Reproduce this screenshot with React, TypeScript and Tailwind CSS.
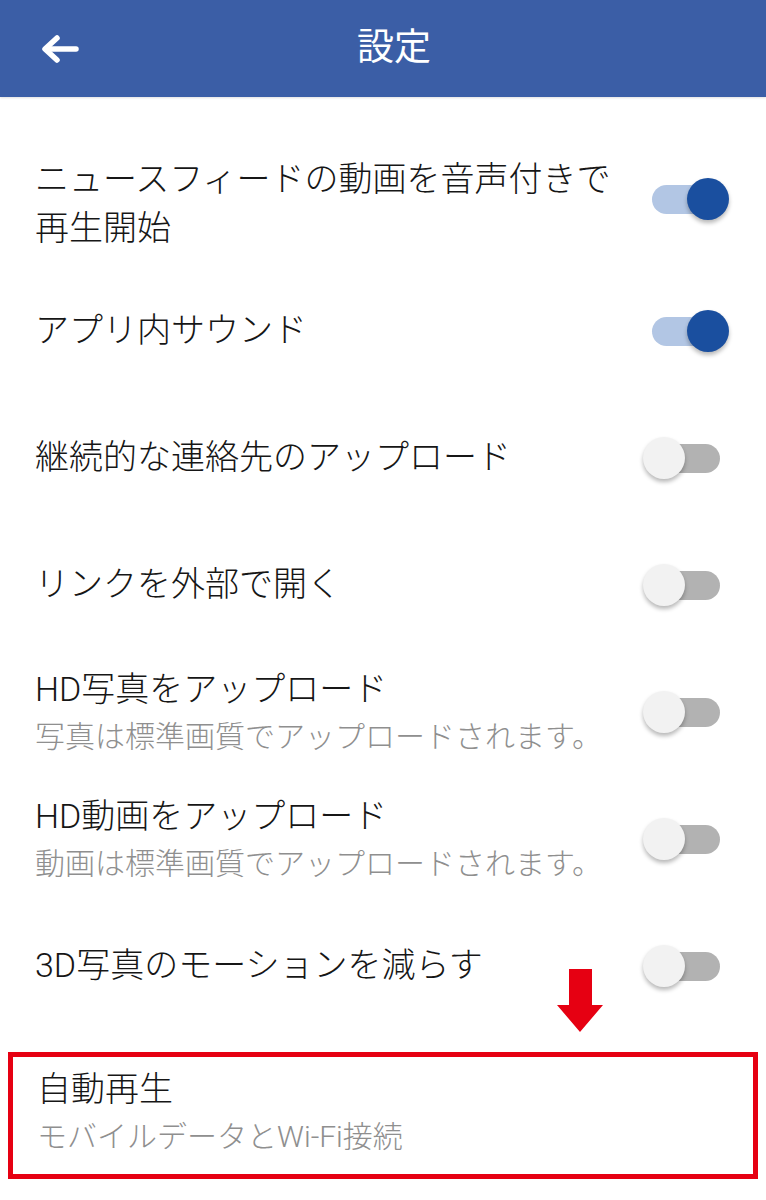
import React from 'react';

type Row = {
  title: string[];
  sub?: string;
  on: boolean;
};

const rows: Row[] = [
  { title: ['ニュースフィードの動画を音声付きで', '再生開始'], on: true },
  { title: ['アプリ内サウンド'], on: true },
  { title: ['継続的な連絡先のアップロード'], on: false },
  { title: ['リンクを外部で開く'], on: false },
  { title: ['HD写真をアップロード'], sub: '写真は標準画質でアップロードされます。', on: false },
  { title: ['HD動画をアップロード'], sub: '動画は標準画質でアップロードされます。', on: false },
  { title: ['3D写真のモーションを減らす'], on: false },
];

const Toggle = ({ on, lift }: { on: boolean; lift?: boolean }) => (
  <div className={`relative w-[86px] h-[42px] shrink-0 ${lift ? 'mb-[10px]' : ''}`}>
    <div
      className={`absolute left-[9px] right-[9px] top-[7px] h-[29px] rounded-full ${
        on ? 'bg-[#b2c6e4]' : 'bg-[#b2b2b2]'
      }`}
    />
    <div
      className={`absolute top-0 w-[42px] h-[42px] rounded-full shadow-[0_3px_4px_rgba(0,0,0,0.28)] ${
        on ? 'right-0 bg-[#1a4f9f]' : 'left-0 bg-[#f2f2f2]'
      }`}
    />
  </div>
);

const BackArrow = () => (
  <svg width="40" height="32" viewBox="0 0 40 32" fill="none" className="shrink-0">
    <path d="M36 16H6" stroke="white" strokeWidth="5.5" strokeLinecap="round" />
    <path d="M17 5 5 16l12 11" stroke="white" strokeWidth="5.5" strokeLinecap="round" strokeLinejoin="round" />
  </svg>
);

const App = () => {
  return (
    <div className="relative w-[766px] min-h-[1200px] bg-white font-['Roboto','Noto_Sans_CJK_JP',sans-serif] font-light text-[#161616]">
      {/* header */}
      <div className="relative h-[97px] bg-[#3b5ea6] flex items-center px-[40px] shadow-[0_1px_2px_rgba(0,0,0,0.12)]">
        <BackArrow />
        <div className="flex-1 text-center text-white text-[37px] font-normal leading-none pl-[4px] pr-[22px] pb-[2px]">設定</div>
      </div>

      <div className="pt-[43px]">
        {rows.map((r, i) => (
          <div key={i} className="h-[127px] flex items-center justify-between pl-[35px] pr-[37px]">
            <div>
              {r.title.map((t, j) => (
                <div key={j} className="text-[34px] leading-[49px] whitespace-nowrap">
                  {t}
                </div>
              ))}
              {r.sub && (
                <div className="text-[30px] leading-[45px] text-[#8f8f8f] whitespace-nowrap">{r.sub}</div>
              )}
            </div>
            <Toggle on={r.on} lift={i === 0} />
          </div>
        ))}

        {/* highlighted item */}
        <div className="mx-[8px] mt-[23px] h-[127px] border-[5px] border-[#e60012] pl-[24px] pb-[8px] flex flex-col justify-center">
          <div className="text-[34px] leading-[49px]">自動再生</div>
          <div className="text-[30px] leading-[45px] text-[#8f8f8f]">モバイルデータとWi-Fi接続</div>
        </div>
      </div>

      {/* annotation arrow */}
      <svg
        className="absolute left-[557px] top-[969px]"
        width="46"
        height="63"
        viewBox="0 0 46 63"
      >
        <polygon points="12,0 35,0 35,36 46,36 23,63 0,36 12,36" fill="#e60012" />
      </svg>
    </div>
  );
};

export default App;
